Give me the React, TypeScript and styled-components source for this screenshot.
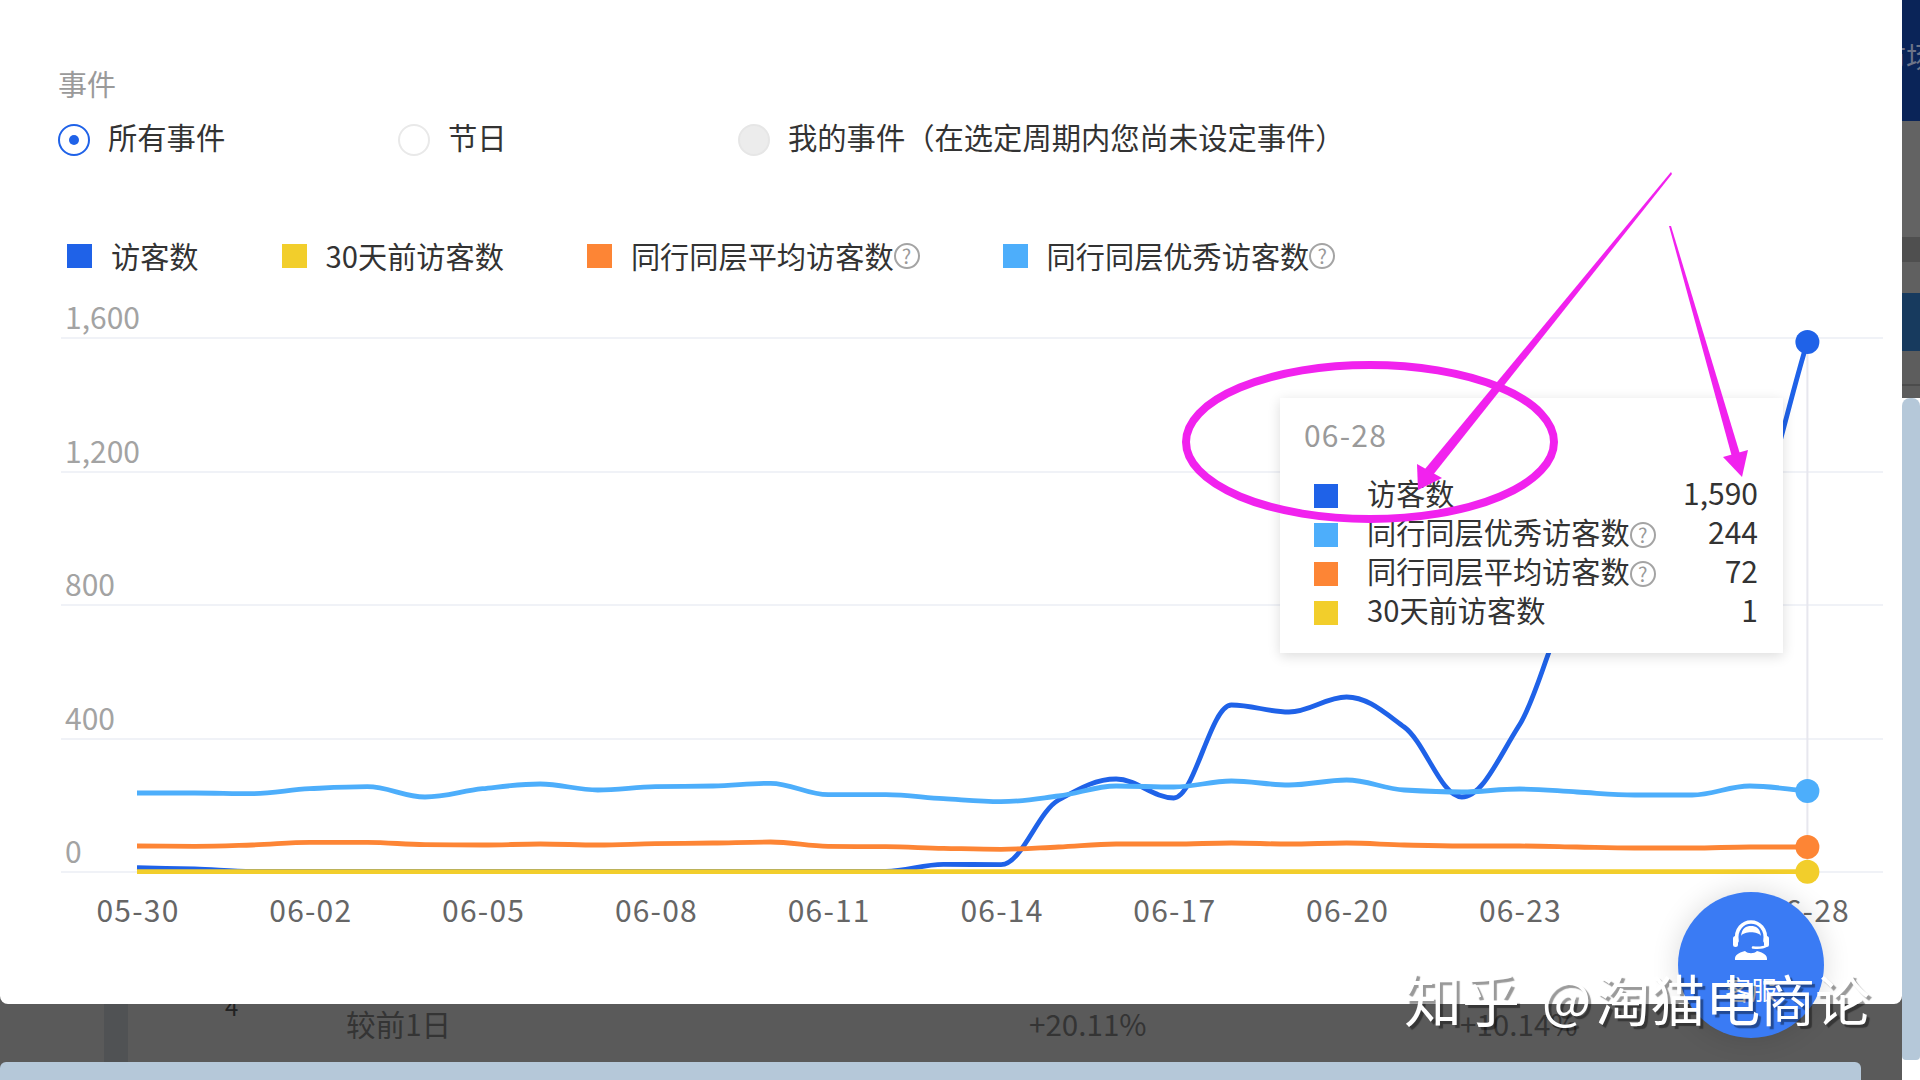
import React from "react";
import styled, { createGlobalStyle } from "styled-components";

const FONT = `"Noto Sans CJK SC", "Noto Sans", sans-serif`;

const GlobalStyle = createGlobalStyle`
  html, body { margin: 0; padding: 0; background: #fff; }
  body { width: 1920px; height: 1080px; overflow: hidden; font-family: ${FONT}; }
`;

const Page = styled.div`
  position: relative;
  display: flex;
  width: 1920px;
  height: 1080px;
  overflow: hidden;
`;
const MainColumn = styled.div`
  display: flex;
  flex-direction: column;
  width: 1902px;
  background: #5a5a5a;
`;
const Modal = styled.section`
  position: relative;
  z-index: 1;
  display: flex;
  flex-direction: column;
  height: 1004px;
  background: #fff;
  border-radius: 0 0 8px 8px;
`;
const Filters = styled.div`
  display: flex;
  flex-direction: column;
  height: 272px;
  box-sizing: border-box;
  padding: 68px 0 0 58px;
`;
const Title = styled.div`
  font-size: 29px;
  line-height: 32px;
  margin-top: -1px;
  margin-bottom: 1px;
  color: #9a9a9a;
`;
const RadioRow = styled.div`
  display: grid;
  grid-template-columns: 340px 340px auto;
  margin-top: 24px;
  height: 32px;
`;
const RadioItem = styled.label`
  display: flex;
  align-items: center;
  gap: 18px;
  font-size: 29.3px;
  line-height: 32px;
  color: #333;
  white-space: nowrap;
`;
const RadioText = styled.span`
  margin-top: -9px;
`;
const RadioMark = styled.span<{ $state: "on" | "off" | "disabled" }>`
  position: relative;
  flex: none;
  box-sizing: border-box;
  width: 32px;
  height: 32px;
  border-radius: 50%;
  border: 2px solid ${(p) => (p.$state === "on" ? "#1f62e8" : p.$state === "off" ? "#e9e9e9" : "#e6e6e6")};
  background: ${(p) => (p.$state === "disabled" ? "#ececec" : "#fff")};
  &::after {
    content: "";
    display: ${(p) => (p.$state === "on" ? "block" : "none")};
    position: absolute;
    left: 9px;
    top: 9px;
    width: 10px;
    height: 10px;
    border-radius: 50%;
    background: #1f62e8;
  }
`;
const Legend = styled.div`
  display: flex;
  align-items: center;
  gap: 83px;
  margin-top: 84px;
  padding-left: 9px;
  height: 32px;
`;
const LegendItem = styled.div`
  display: flex;
  align-items: center;
  font-size: 29.2px;
  line-height: 32px;
  color: #333;
  white-space: nowrap;
`;
const LegendText = styled.span`
  margin-top: -2px;
`;
const Swatch = styled.span<{ $color: string }>`
  flex: none;
  width: 25px;
  height: 24px;
  margin-right: 19px;
  background: ${(p) => p.$color};
`;
const HelpMark = styled.span`
  flex: none;
  box-sizing: border-box;
  display: inline-flex;
  align-items: center;
  justify-content: center;
  width: 26px;
  height: 26px;
  margin-left: 0;
  border: 2px solid #a4a4a4;
  border-radius: 50%;
  font-size: 20px;
  line-height: 1;
  color: #9a9a9a;
`;
const ChartSvg = styled.svg`
  display: block;
  flex: none;
  width: 1902px;
  height: 732px;
`;
const AxisText = styled.text<{ $tone: string; $spacing: number }>`
  font-family: ${FONT};
  font-size: 30px;
  letter-spacing: ${(p) => p.$spacing}px;
  fill: ${(p) => p.$tone};
`;

const Footer = styled.div`
  display: flex;
  flex-direction: column;
  height: 76px;
`;
const FooterRow = styled.div`
  display: grid;
  grid-template-columns: 104px 24px 97px 121px 683px 431px 1fr;
  height: 58px;
  font-size: 29.6px;
  line-height: 40px;
  color: #343434;
  white-space: nowrap;
`;
const FooterStub = styled.div`
  grid-column: 2;
  background: #505254;
`;
const RankNumber = styled.div`
  grid-column: 4;
  font-size: 24px;
  line-height: 24px;
  margin-top: -10px;
  color: #222;
`;
const FooterCell = styled.div``;
const HorizontalBar = styled.div`
  width: 1861px;
  height: 18px;
  background: #b5c8d9;
  border-radius: 6px 6px 0 0;
`;

const SideStrip = styled.aside`
  display: flex;
  flex-direction: column;
  flex: none;
  width: 18px;
  height: 1080px;
  overflow: hidden;
  background: #fff;
`;
const SideBand = styled.div<{ $h: number; $bg: string }>`
  flex: none;
  height: ${(p) => p.$h}px;
  background: ${(p) => p.$bg};
`;
const NavBand = styled.div`
  flex: none;
  height: 121px;
  box-sizing: border-box;
  padding-top: 40px;
  background: #0a2458;
  font-size: 28px;
  line-height: 32px;
  color: #6d7488;
  white-space: nowrap;
  text-indent: -24px;
`;
const ScrollThumb = styled.div`
  flex: none;
  height: 662px;
  background: #b5c8d9;
  border-radius: 8px 8px 4px 4px;
`;

const Tooltip = styled.div`
  position: absolute;
  z-index: 2;
  left: 1280px;
  top: 398px;
  box-sizing: border-box;
  width: 503px;
  height: 255px;
  padding: 20px 25px 0 24px;
  background: #fff;
  box-shadow: 0 3px 12px rgba(0, 0, 0, 0.14);
`;
const TooltipDate = styled.div`
  font-size: 30px;
  letter-spacing: 1.2px;
  line-height: 32px;
  color: #9a9a9a;
  margin-bottom: 26px;
`;
const TooltipRow = styled.div`
  display: flex;
  align-items: center;
  height: 39px;
  padding-left: 10px;
  font-size: 29.2px;
  color: #333;
  white-space: nowrap;
`;
const TooltipSwatch = styled.span<{ $color: string }>`
  flex: none;
  width: 24px;
  height: 24px;
  margin-right: 29px;
  background: ${(p) => p.$color};
`;
const TooltipLabel = styled.span`
  margin-top: -7px;
`;
const TooltipValue = styled.span`
  margin-left: auto;
  margin-top: -7px;
  font-size: 30px;
`;

const Annotation = styled.svg`
  position: absolute;
  z-index: 3;
  left: 0;
  top: 0;
  width: 1920px;
  height: 1080px;
  pointer-events: none;
`;
const ServiceButton = styled.div`
  position: absolute;
  z-index: 4;
  left: 1678px;
  top: 892px;
  box-sizing: border-box;
  display: flex;
  flex-direction: column;
  align-items: center;
  width: 146px;
  height: 146px;
  padding-top: 28px;
  border-radius: 50%;
  background: #3a7bf4;
  box-shadow: 0 0 28px rgba(0, 0, 0, 0.14);
  color: #fff;
  font-size: 26px;
  line-height: 34px;
`;
const ServiceLabel = styled.div`
  margin-top: 12px;
`;
const Watermark = styled.div`
  position: absolute;
  z-index: 5;
  left: 1404px;
  top: 962px;
  display: flex;
  align-items: center;
  font-size: 55px;
  line-height: 70px;
  color: #fff;
  white-space: nowrap;
  text-shadow: 3px 3px 1px rgba(0, 0, 0, 0.4);
`;
const WatermarkBrand = styled.span`
  font-size: 58px;
  margin-right: 22px;
`;
const WatermarkAt = styled.span`
  font-size: 52px;
  margin-right: 4px;
`;

const X0 = 137;
const STEP = 57.6;
const GRID = [
  { y: 338, label: "1,600" },
  { y: 472, label: "1,200" },
  { y: 605, label: "800" },
  { y: 739, label: "400" },
  { y: 872, label: "0" },
];
const TICKS = ["05-30", "06-02", "06-05", "06-08", "06-11", "06-14", "06-17", "06-20", "06-23", "06-26", "06-28"];
const COLORS = { visitors: "#1f62e8", good: "#4daefb", avg: "#fd8535", past: "#f2ce2b" };

const SERIES: { color: string; ys: number[] }[] = [
  {
    color: COLORS.visitors,
    ys: [867.7, 869, 871.5, 871.5, 871.5, 871.5, 871.5, 871.5, 871.5, 871.5, 871.5, 871.5, 871.5, 871.3, 864.3, 864.7, 800, 779, 798, 705, 712, 697, 727, 797, 725, 605, 600, 590, 527, 342],
  },
  {
    color: COLORS.avg,
    ys: [846, 846.3, 845, 842.3, 842.3, 844.7, 845, 844, 845, 843.7, 843, 842, 846.3, 846.7, 848.3, 849.3, 847, 844, 844, 843, 844, 843, 845, 846, 846, 847, 848, 848, 847, 847],
  },
  {
    color: COLORS.good,
    ys: [793, 793, 793.7, 788.7, 786.7, 797, 788.7, 784, 790, 786.7, 786, 783.3, 794.7, 794.7, 798.7, 801.7, 796, 786, 787, 781, 785, 780, 790, 792, 789, 792, 795, 795, 786, 791],
  },
  {
    color: COLORS.past,
    ys: Array.from({ length: 30 }, () => 871.7),
  },
];

function smoothPath(ys: number[]): string {
  const slope = (i: number) => {
    if (i === 0) return (ys[1] - ys[0]) / STEP;
    if (i === ys.length - 1) return (ys[i] - ys[i - 1]) / STEP;
    const a = ys[i] - ys[i - 1];
    const b = ys[i + 1] - ys[i];
    if (a * b <= 0) return 0;
    return (2 * a * b) / (a + b) / STEP;
  };
  let d = `M${X0} ${ys[0]}`;
  for (let i = 0; i < ys.length - 1; i++) {
    const x1 = X0 + i * STEP;
    const x2 = x1 + STEP;
    const h = STEP * 0.36;
    d += ` C${(x1 + h).toFixed(1)} ${(ys[i] + slope(i) * h).toFixed(1)} ${(x2 - h).toFixed(1)} ${(ys[i + 1] - slope(i + 1) * h).toFixed(1)} ${x2.toFixed(1)} ${ys[i + 1]}`;
  }
  return d;
}

const LEGEND = [
  { color: COLORS.visitors, label: "访客数", help: false },
  { color: COLORS.past, label: "30天前访客数", help: false },
  { color: COLORS.avg, label: "同行同层平均访客数", help: true },
  { color: COLORS.good, label: "同行同层优秀访客数", help: true },
];
const TIP_ROWS = [
  { color: COLORS.visitors, label: "访客数", help: false, value: "1,590" },
  { color: COLORS.good, label: "同行同层优秀访客数", help: true, value: "244" },
  { color: COLORS.avg, label: "同行同层平均访客数", help: true, value: "72" },
  { color: COLORS.past, label: "30天前访客数", help: false, value: "1" },
];

function HeadsetIcon() {
  return (
    <svg width="38" height="40" viewBox="0 0 38 40" fill="none">
      <path d="M5 21 C3 9 11 2 19 2 C27 2 35 9 33 21" stroke="#fff" strokeWidth="3.6" strokeLinecap="round" />
      <path d="M9 16 C10 8 14 6 19 6 C24 6 28 8 29 16 C26 11 12 11 9 16Z" fill="#fff" />
      <rect x="1" y="16" width="5" height="11" rx="2.5" fill="#fff" />
      <rect x="32" y="16" width="5" height="11" rx="2.5" fill="#fff" />
      <path d="M34 26 C31 28 27 28 21 27.5" stroke="#fff" strokeWidth="2.6" strokeLinecap="round" />
      <path d="M3 40 C2.5 35 6 33 13 31 C16 34 22 34 25 31 C32 33 35.5 35 35 40Z" fill="#fff" />
    </svg>
  );
}

export default function App() {
  const last = X0 + 29 * STEP;
  return (
    <Page>
      <GlobalStyle />
      <MainColumn>
        <Modal>
          <Filters>
            <Title>事件</Title>
            <RadioRow>
              <RadioItem><RadioMark $state="on" /><RadioText>所有事件</RadioText></RadioItem>
              <RadioItem><RadioMark $state="off" /><RadioText>节日</RadioText></RadioItem>
              <RadioItem><RadioMark $state="disabled" /><RadioText>我的事件（在选定周期内您尚未设定事件）</RadioText></RadioItem>
            </RadioRow>
            <Legend>
              {LEGEND.map((l) => (
                <LegendItem key={l.label}>
                  <Swatch $color={l.color} />
                  <LegendText>{l.label}</LegendText>
                  {l.help && <HelpMark>?</HelpMark>}
                </LegendItem>
              ))}
            </Legend>
          </Filters>
          <ChartSvg viewBox="0 272 1902 732">
            {GRID.map((g) => (
              <g key={g.label}>
                <line x1="61" x2="1883" y1={g.y} y2={g.y} stroke="#f0f2f7" strokeWidth="2" />
                <AxisText $tone="#a3a3a3" $spacing={0} x="65" y={g.y - 9}>{g.label}</AxisText>
              </g>
            ))}
            {TICKS.filter((t) => t !== "06-26").map((t, i) => (
              <AxisText
                key={t}
                $tone="#666"
                $spacing={1.2}
                textAnchor="middle"
                x={t === "06-28" ? last + 1 : X0 + 1 + i * 3 * STEP}
                y="922"
              >
                {t}
              </AxisText>
            ))}
            <line x1={last} x2={last} y1="342" y2="872" stroke="#e7e7ee" strokeWidth="2" />
            {SERIES.map((s) => (
              <path
                key={s.color}
                d={smoothPath(s.ys)}
                fill="none"
                stroke={s.color}
                strokeWidth="4.8"
                strokeLinejoin="round"
              />
            ))}
            {SERIES.map((s) => (
              <circle key={s.color} cx={last} cy={s.ys[29]} r="12" fill={s.color} />
            ))}
          </ChartSvg>
        </Modal>
        <Footer>
          <FooterRow>
            <FooterStub />
            <RankNumber>4</RankNumber>
            <FooterCell>较前1日</FooterCell>
            <FooterCell>+20.11%</FooterCell>
            <FooterCell>+10.14%</FooterCell>
          </FooterRow>
          <HorizontalBar />
        </Footer>
      </MainColumn>
      <SideStrip>
        <NavBand>市场</NavBand>
        <SideBand $h={116} $bg="#636363" />
        <SideBand $h={25} $bg="#4f4f4f" />
        <SideBand $h={31} $bg="#606060" />
        <SideBand $h={58} $bg="#173a5e" />
        <SideBand $h={33} $bg="#5d5d5d" />
        <SideBand $h={2} $bg="#4c4c4c" />
        <SideBand $h={12} $bg="#5d5d5d" />
        <ScrollThumb />
      </SideStrip>

      <Tooltip>
        <TooltipDate>06-28</TooltipDate>
        {TIP_ROWS.map((r) => (
          <TooltipRow key={r.label}>
            <TooltipSwatch $color={r.color} />
            <TooltipLabel>{r.label}</TooltipLabel>
            {r.help && <HelpMark>?</HelpMark>}
            <TooltipValue>{r.value}</TooltipValue>
          </TooltipRow>
        ))}
      </Tooltip>

      <Annotation viewBox="0 0 1920 1080">
        <ellipse cx="1370" cy="442" rx="184" ry="77" fill="none" stroke="#f122ee" strokeWidth="8" />
        <polygon points="1671,172 1672,174 1433,475 1425,469" fill="#f122ee" />
        <polygon points="1418,490 1417,464 1442,478" fill="#f122ee" />
        <polygon points="1669,226 1671,226 1740,454 1732,457" fill="#f122ee" />
        <polygon points="1742,477 1723,457 1748,450" fill="#f122ee" />
      </Annotation>

      <ServiceButton>
        <HeadsetIcon />
        <ServiceLabel>客服</ServiceLabel>
      </ServiceButton>
      <Watermark>
        <WatermarkBrand>知乎</WatermarkBrand>
        <WatermarkAt>@</WatermarkAt>
        淘猫电商论
      </Watermark>
    </Page>
  );
}
